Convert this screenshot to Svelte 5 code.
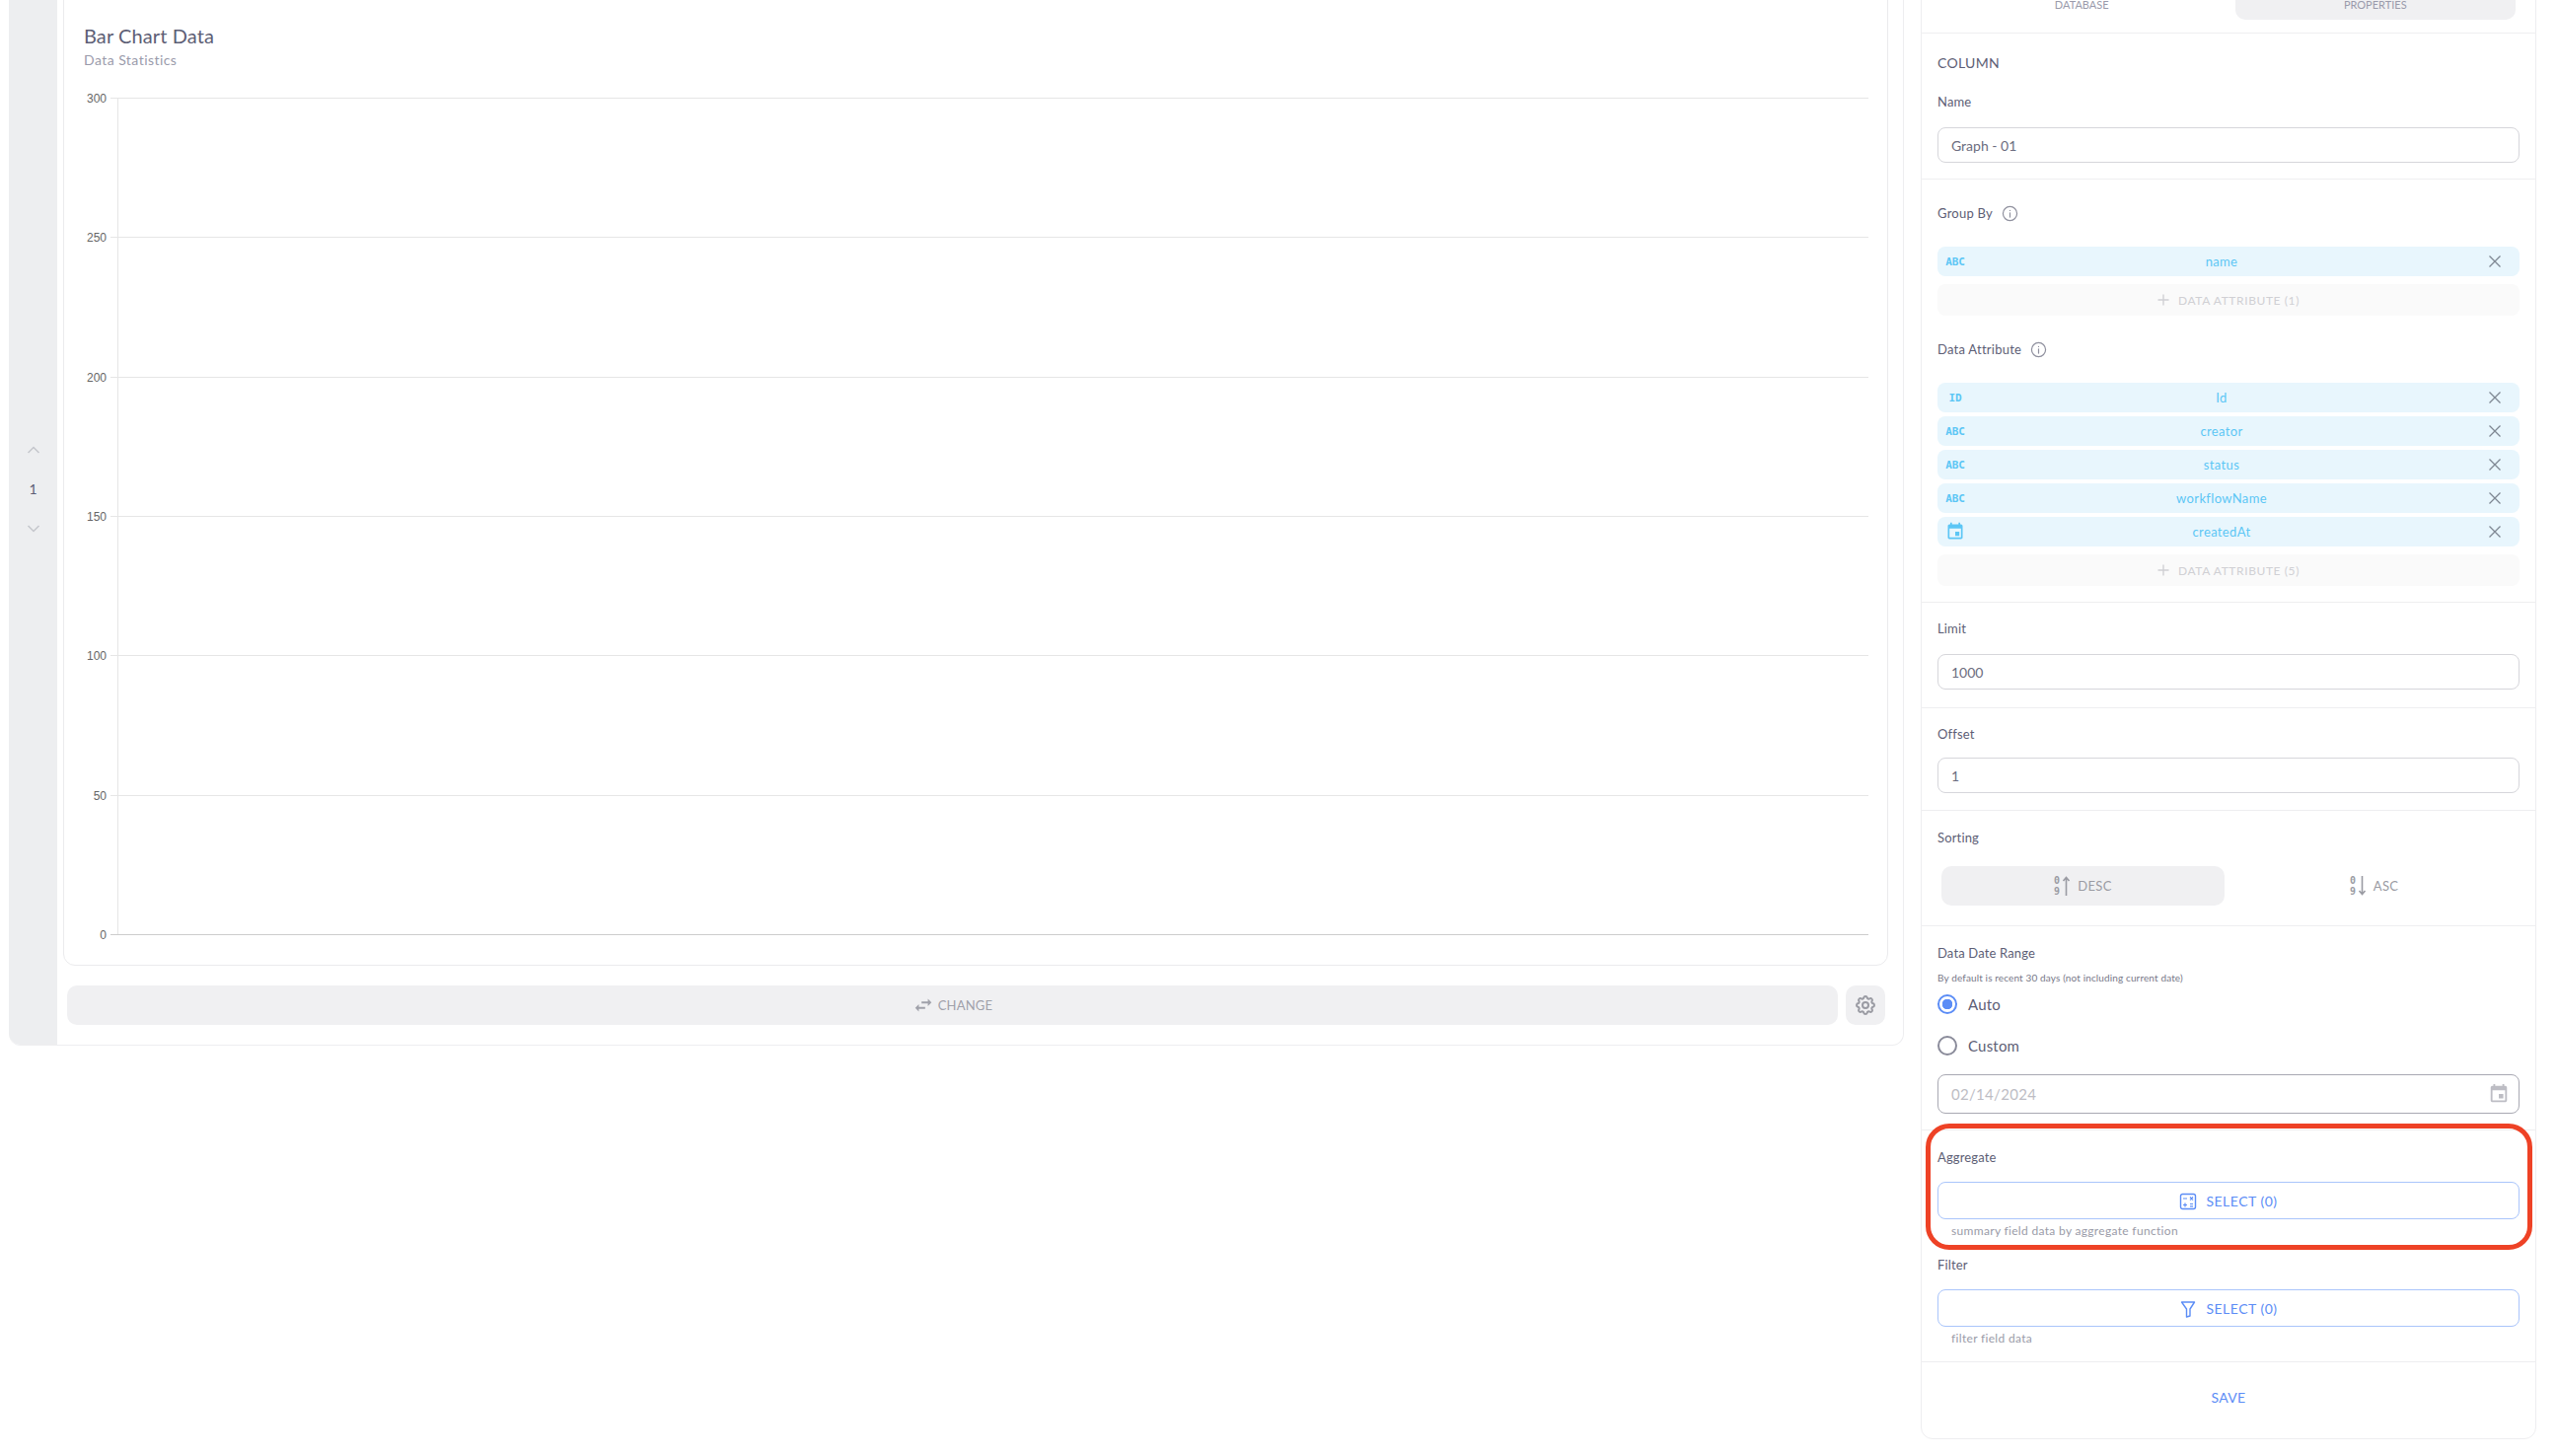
<script>
  const ticks = [300, 250, 200, 150, 100, 50, 0];
  const groupBy = [{ type: 'ABC', name: 'name' }];
  const attributes = [
    { type: 'ID', name: 'Id' },
    { type: 'ABC', name: 'creator' },
    { type: 'ABC', name: 'status' },
    { type: 'ABC', name: 'workflowName' },
    { type: 'date', name: 'createdAt' }
  ];
  const eventPath = 'M17 12h-5v5h5v-5zM16 1v2H8V1H6v2H5c-1.11 0-1.99.9-1.99 2L3 19c0 1.1.89 2 2 2h14c1.1 0 2-.9 2-2V5c0-1.1-.9-2-2-2h-1V1h-2zm3 18H5V8h14v11z';
  const chartTop = 80;
</script>

{#snippet chip(item)}
  <div class="chip">
    <span class="chip-type">
      {#if item.type === 'date'}
        <svg width="20" height="20" viewBox="0 0 24 24" fill="currentColor"><path d={eventPath} /></svg>
      {:else}
        {item.type}
      {/if}
    </span>
    <span class="chip-name">{item.name}</span>
    <span class="chip-close">
      <svg width="14" height="14" viewBox="0 0 14 14" fill="none" stroke="currentColor" stroke-width="1.3"><path d="M1.5 1.5l11 11M12.5 1.5l-11 11" /></svg>
    </span>
  </div>
{/snippet}

{#snippet addButton(label)}
  <div class="add-btn">
    <svg width="12" height="12" viewBox="0 0 12 12" stroke="currentColor" stroke-width="1.4"><path d="M6 .5v11M.5 6h11" /></svg>
    <span>{label}</span>
  </div>
{/snippet}

{#snippet info()}
  <svg class="info" width="17" height="17" viewBox="0 0 24 24" fill="none" stroke="currentColor" stroke-width="1.7" stroke-linecap="round"><circle cx="12" cy="12" r="10" /><path d="M12 11v6" /><path d="M12 7.5v.2" /></svg>
{/snippet}

{#snippet sortIcon(up)}
  <svg width="17" height="20" viewBox="0 0 17 20">
    <text x="0" y="8" class="sort-digit">0</text>
    <text x="0" y="19" class="sort-digit">9</text>
    <path d={up ? 'M12.5 20V2M9.5 5L12.5 1.5 15.5 5' : 'M12.5 0v18M9.5 15L12.5 18.5 15.5 15'} fill="none" stroke="currentColor" stroke-width="1.6" />
  </svg>
{/snippet}

<div class="page">
  <div class="layout">
    <section class="shell">
      <aside class="pager">
        <svg width="14" height="8" viewBox="0 0 14 8" fill="none" stroke="currentColor" stroke-width="1.5"><path d="M1.5 7L7 1.5 12.5 7" /></svg>
        <span class="page-no">1</span>
        <svg width="14" height="8" viewBox="0 0 14 8" fill="none" stroke="currentColor" stroke-width="1.5"><path d="M1.5 1L7 6.5 12.5 1" /></svg>
      </aside>
      <div class="main">
        <div class="card">
          <h2 class="title">Bar Chart Data</h2>
          <p class="subtitle">Data Statistics</p>
          <svg class="chart" width="1848" height="890" viewBox="65 {chartTop} 1848 890">
            <line x1="119.5" x2="119.5" y1="99" y2="947" stroke="#e6e6e6" />
            {#each ticks as t, i}
              {@const y = Math.round(99 + i * 141.33) + 0.5}
              <line x1="112" x2="1894" y1={y} y2={y} stroke={t === 0 ? '#ccc' : '#e6e6e6'} />
              <text x="108" y={y + 4} text-anchor="end" class="tick">{t}</text>
            {/each}
          </svg>
        </div>
        <div class="actions">
          <div class="change">
            <svg width="22" height="22" viewBox="0 0 24 24" fill="currentColor"><path d="M6.99 11L3 15l3.99 4v-3H14v-2H6.99v-3zM21 9l-3.99-4v3H10v2h7.01v3L21 9z" /></svg>
            <span>CHANGE</span>
          </div>
          <div class="gear">
            <svg width="24" height="24" viewBox="0 0 24 24" fill="none" stroke="currentColor" stroke-width="2"><path d="M10.325 4.317c.426 -1.756 2.924 -1.756 3.35 0a1.724 1.724 0 0 0 2.573 1.066c1.543 -.94 3.31 .826 2.37 2.37a1.724 1.724 0 0 0 1.065 2.572c1.756 .426 1.756 2.924 0 3.35a1.724 1.724 0 0 0 -1.066 2.573c.94 1.543 -.826 3.31 -2.37 2.37a1.724 1.724 0 0 0 -2.572 1.065c-.426 1.756 -2.924 1.756 -3.35 0a1.724 1.724 0 0 0 -2.573 -1.066c-1.543 .94 -3.31 -.826 -2.37 -2.37a1.724 1.724 0 0 0 -1.065 -2.572c-1.756 -.426 -1.756 -2.924 0 -3.35a1.724 1.724 0 0 0 1.066 -2.573c-.94 -1.543 .826 -3.31 2.37 -2.37c1 .608 2.296 .07 2.572 -1.065z" /><circle cx="12" cy="12" r="3" /></svg>
          </div>
        </div>
      </div>
    </section>

    <section class="panel">
      <div class="tabs">
        <div class="tab">DATABASE</div>
        <div class="tab active">PROPERTIES</div>
      </div>

      <div class="section sec-name">
        <div class="heading">COLUMN</div>
        <div class="label name-label">Name</div>
        <div class="input name-input">Graph - 01</div>
      </div>

      <div class="section sec-attrs">
        <div class="label-row">Group By {@render info()}</div>
        <div class="chips">
          {#each groupBy as item}{@render chip(item)}{/each}
        </div>
        {@render addButton('DATA ATTRIBUTE (1)')}
        <div class="label-row second">Data Attribute {@render info()}</div>
        <div class="chips">
          {#each attributes as item}{@render chip(item)}{/each}
        </div>
        {@render addButton('DATA ATTRIBUTE (5)')}
      </div>

      <div class="section sec-limit">
        <div class="label">Limit</div>
        <div class="input">1000</div>
      </div>

      <div class="section sec-offset">
        <div class="label">Offset</div>
        <div class="input">1</div>
      </div>

      <div class="section sec-sort">
        <div class="label">Sorting</div>
        <div class="toggle">
          <div class="toggle-item active">{@render sortIcon(true)}<span>DESC</span></div>
          <div class="toggle-item">{@render sortIcon(false)}<span>ASC</span></div>
        </div>
      </div>

      <div class="section sec-date">
        <div class="label">Data Date Range</div>
        <div class="hint">By default is recent 30 days (not including current date)</div>
        <div class="radio-row first"><span class="radio checked"></span>Auto</div>
        <div class="radio-row"><span class="radio"></span>Custom</div>
        <div class="date-input">
          <span>02/14/2024</span>
          <svg width="22" height="22" viewBox="0 0 24 24" fill="currentColor"><path d={eventPath} /></svg>
        </div>
      </div>

      <div class="section sec-agg">
        <div class="highlight"></div>
        <div class="label">Aggregate</div>
        <div class="select-btn">
          <svg width="18" height="18" viewBox="0 0 18 18" fill="none" stroke="currentColor" stroke-width="1.4"><rect x="1.5" y="1.5" width="15" height="15" rx="2" /><path d="M4 6h4M11 4.5l3 3M14 4.5l-3 3M4 12.5h4M6 10.5v4M11 11.5h3M11 13.8h3" stroke-width="1.2" /></svg>
          <span>SELECT (0)</span>
        </div>
        <div class="helper">summary field data by aggregate function</div>
        <div class="label filter-label">Filter</div>
        <div class="select-btn">
          <svg width="18" height="18" viewBox="0 0 18 18" fill="none" stroke="currentColor" stroke-width="1.4" stroke-linejoin="round"><path d="M2.5 2h13L11 9v7l-3.5 1V9z" /></svg>
          <span>SELECT (0)</span>
        </div>
        <div class="helper">filter field data</div>
      </div>

      <div class="save">SAVE</div>
    </section>
  </div>
</div>

<style>
  :global(body) {
    margin: 0;
    background: #fff;
  }

  .page {
    height: 1476px;
    overflow: hidden;
    font-family: Lato, "Open Sans", sans-serif;
    color: #5d5e75;
  }

  /* page is scrolled a little, top of the cards is cut off */
  .layout {
    display: flex;
    align-items: flex-start;
    margin-top: -40px;
    padding-left: 9px;
    gap: 17px;
  }

  .shell {
    display: flex;
    width: 1921px;
    height: 1100px;
    box-sizing: border-box;
    border: 1px solid #eeeef0;
    border-left: 0;
    border-radius: 12px;
    overflow: hidden;
  }

  .pager {
    width: 49px;
    flex-shrink: 0;
    background: #edeef0;
    display: flex;
    flex-direction: column;
    align-items: center;
    padding-top: 491px;
    box-sizing: border-box;
    color: #c5c6cc;
  }

  .page-no {
    margin: 27px 0;
    height: 18px;
    line-height: 18px;
    font-size: 14px;
    color: #5d5e75;
  }

  .main {
    padding: 20px 0 0 6px;
    width: 1856px;
  }

  .card {
    width: 1850px;
    height: 998px;
    box-sizing: border-box;
    border: 1px solid #ebebed;
    border-radius: 12px;
  }

  .title {
    margin: 40px 0 0 20px;
    font-size: 20px;
    line-height: 28px;
    font-weight: 400;
    letter-spacing: 0.1px;
    color: #5d5e75;
  }

  .subtitle {
    margin: 1px 0 0 20px;
    font-size: 14px;
    line-height: 20px;
    letter-spacing: 0.45px;
    color: #9a9bab;
  }

  .chart {
    display: block;
    margin-top: 9px;
  }

  .tick {
    font-family: "Liberation Sans", Arial, sans-serif;
    font-size: 12px;
    fill: #666;
  }

  .actions {
    display: flex;
    gap: 8px;
    margin: 20px 0 0 4px;
  }

  .change {
    width: 1795px;
    height: 40px;
    display: flex;
    align-items: center;
    justify-content: center;
    gap: 4px;
    background: #f0f0f2;
    border-radius: 10px;
    color: #a0a1aa;
    font-size: 13px;
    letter-spacing: 0.2px;
    box-sizing: border-box;
  }

  .gear {
    width: 40px;
    height: 40px;
    display: flex;
    align-items: center;
    justify-content: center;
    background: #f0f0f2;
    border-radius: 10px;
    color: #9a9ba3;
  }

  .panel {
    width: 624px;
    height: 1499px;
    box-sizing: border-box;
    border: 1px solid #eeeef0;
    border-radius: 12px;
    flex-shrink: 0;
  }

  .tabs {
    height: 73px;
    box-sizing: border-box;
    display: flex;
    gap: 13px;
    padding: 24px 20px 13px;
    border-bottom: 1px solid #eeeef0;
  }

  .tab {
    flex: 1;
    border-radius: 10px;
    display: flex;
    align-items: center;
    justify-content: center;
    padding-top: 3px;
    font-size: 11px;
    color: #9a9bab;
  }

  .tab.active {
    background: #f0f0f2;
  }

  .section {
    padding: 0 16px;
    border-bottom: 1px solid #eeeef0;
    position: relative;
  }

  .heading {
    font-size: 14px;
    line-height: 21px;
    letter-spacing: 0.3px;
  }

  .label {
    font-size: 13px;
    line-height: 16px;
    letter-spacing: 0.15px;
  }

  .label-row {
    display: flex;
    align-items: center;
    gap: 9px;
    height: 20px;
    font-size: 13px;
    letter-spacing: 0.25px;
  }

  .info {
    color: #8f909e;
  }

  .sec-name { padding-top: 19px; padding-bottom: 16px; }
  .name-label { margin-top: 21px; }
  .name-input { margin-top: 18px; }

  .sec-attrs { padding-top: 24px; padding-bottom: 16px; }
  .sec-attrs .chips { margin-top: 24px; }
  .second { margin-top: 24px; }

  .sec-limit { padding-top: 18px; padding-bottom: 18px; }
  .sec-limit .input { margin-top: 18px; }
  .sec-offset { padding-top: 18px; padding-bottom: 17px; }
  .sec-offset .input { margin-top: 16px; }
  .sec-sort { padding-top: 19px; padding-bottom: 20px; }
  .sec-date { padding-top: 19px; padding-bottom: 16px; }
  .sec-agg { padding-top: 19px; padding-bottom: 15px; }

  .input {
    height: 36px;
    box-sizing: border-box;
    border: 1px solid #d6d6db;
    border-radius: 8px;
    padding: 1px 13px 0;
    display: flex;
    align-items: center;
    font-size: 14px;
    color: #6c6d80;
  }

  .chips {
    display: flex;
    flex-direction: column;
    gap: 4px;
  }

  .chip {
    display: flex;
    align-items: center;
    height: 30px;
    border-radius: 8px;
    background: #e8f6fd;
    color: #5cc6f5;
  }

  .chip-type {
    width: 36px;
    display: flex;
    justify-content: center;
    font-family: "DejaVu Sans Mono", "Liberation Mono", monospace;
    font-weight: 700;
    font-size: 11px;
    letter-spacing: -0.2px;
  }

  .chip-name {
    flex: 1;
    text-align: center;
    font-size: 13px;
    letter-spacing: 0.35px;
  }

  .chip-close {
    width: 50px;
    display: flex;
    justify-content: center;
    color: #7e8792;
  }

  .add-btn {
    margin-top: 8px;
    height: 32px;
    display: flex;
    align-items: center;
    justify-content: center;
    gap: 9px;
    border-radius: 8px;
    background: #fafafa;
    color: #d0d0d4;
    font-size: 12px;
    letter-spacing: 0.6px;
  }

  .toggle {
    display: flex;
    gap: 8px;
    margin: 21px 4px 0;
  }

  .toggle-item {
    flex: 1;
    height: 40px;
    border-radius: 10px;
    display: flex;
    align-items: center;
    justify-content: center;
    gap: 7px;
    font-size: 13px;
    letter-spacing: 0.3px;
    color: #9a9ba3;
  }

  .toggle-item.active {
    background: #f0f0f2;
  }

  .sort-digit {
    font-family: "DejaVu Sans Mono", monospace;
    font-weight: 700;
    font-size: 10px;
    fill: currentColor;
  }

  .hint {
    margin-top: 10px;
    font-size: 10px;
    line-height: 14px;
    letter-spacing: 0.13px;
    color: #777888;
  }

  .radio-row {
    margin-top: 14px;
    height: 28px;
    display: flex;
    align-items: center;
    gap: 11px;
    font-size: 15px;
    letter-spacing: 0.2px;
  }

  .radio-row.first {
    margin-top: 6px;
  }

  .radio {
    width: 20px;
    height: 20px;
    box-sizing: border-box;
    border: 2px solid #8a8b9a;
    border-radius: 50%;
  }

  .radio.checked {
    border-color: #5c8df6;
    background: radial-gradient(circle, #5c8df6 0 5px, #fff 5.5px);
  }

  .date-input {
    margin-top: 15px;
    height: 40px;
    box-sizing: border-box;
    border: 1px solid #a9a9b3;
    border-radius: 8px;
    padding: 0 9px 0 13px;
    display: flex;
    align-items: center;
    justify-content: space-between;
    font-size: 15px;
    letter-spacing: 0.3px;
    color: #bdbdc4;
  }

  .select-btn {
    margin-top: 17px;
    height: 38px;
    box-sizing: border-box;
    border: 1px solid #aac5fb;
    border-radius: 8px;
    display: flex;
    align-items: center;
    justify-content: center;
    gap: 9px;
    padding-top: 1px;
    font-size: 14px;
    letter-spacing: 0.5px;
    color: #5c8df6;
  }

  .helper {
    margin-top: 4px;
    padding-left: 14px;
    font-size: 12px;
    line-height: 16px;
    letter-spacing: 0.32px;
    color: #9a9ba8;
  }

  .filter-label {
    margin-top: 18px;
  }

  /* red annotation box around the aggregate block */
  .highlight {
    position: absolute;
    left: 4px;
    right: 3px;
    top: -7px;
    height: 128px;
    box-sizing: border-box;
    border: 5px solid #ee4226;
    border-radius: 24px;
    pointer-events: none;
  }

  .save {
    height: 77px;
    box-sizing: border-box;
    padding-bottom: 6px;
    display: flex;
    align-items: center;
    justify-content: center;
    font-size: 14px;
    letter-spacing: 0.3px;
    color: #5c8df6;
  }
</style>
